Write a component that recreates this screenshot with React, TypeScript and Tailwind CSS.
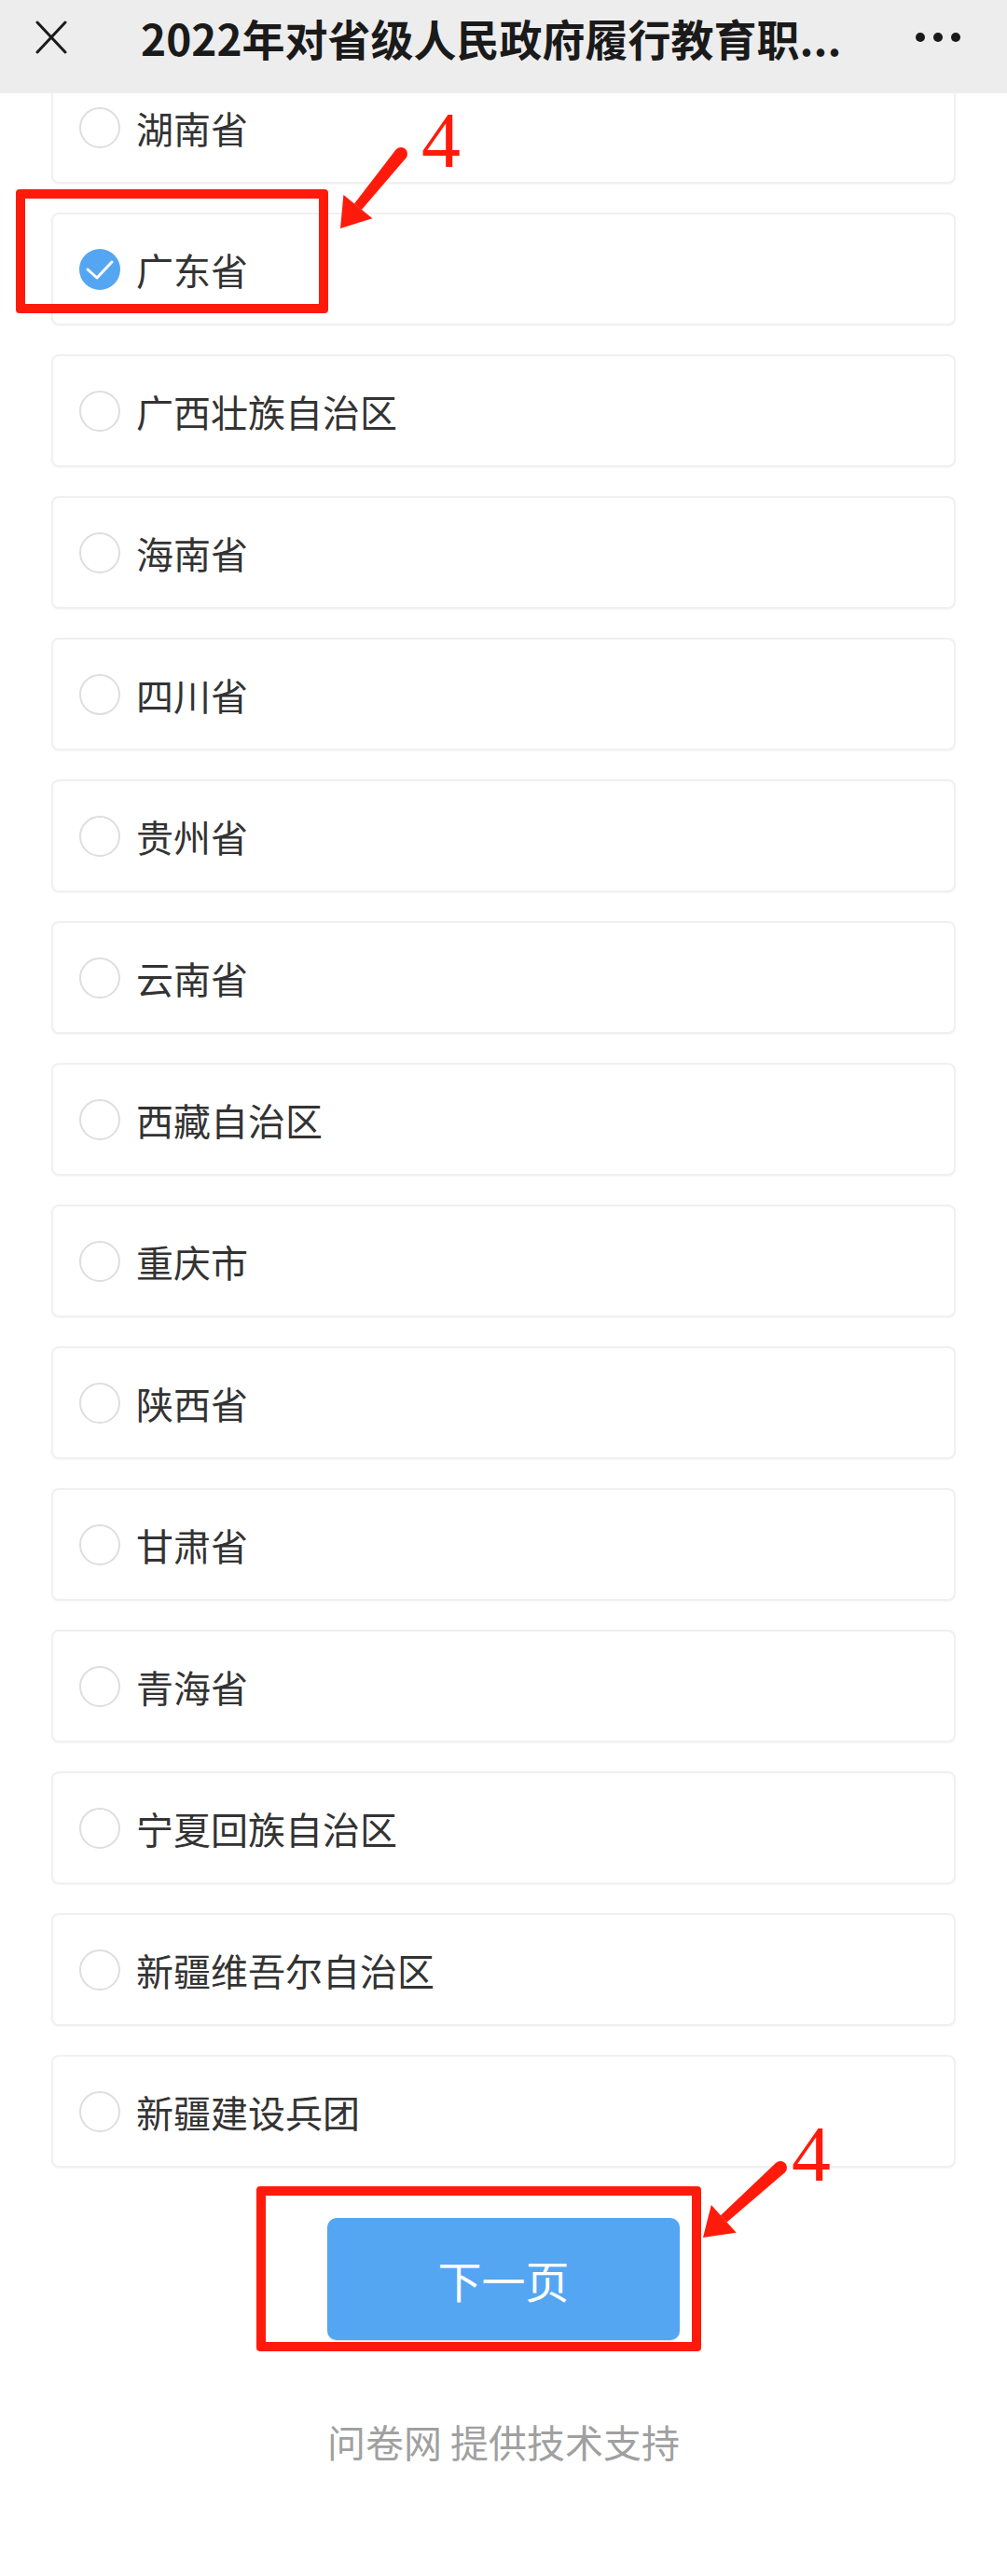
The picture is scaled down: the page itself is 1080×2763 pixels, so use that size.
import React from 'react';

const provinces = [
  '湖南省',
  '广东省',
  '广西壮族自治区',
  '海南省',
  '四川省',
  '贵州省',
  '云南省',
  '西藏自治区',
  '重庆市',
  '陕西省',
  '甘肃省',
  '青海省',
  '宁夏回族自治区',
  '新疆维吾尔自治区',
  '新疆建设兵团',
];

type Pt = [number, number];

// tapered arrow from tail to tip, as drawn in the annotation layer
const Arrow: React.FC<{ tail: Pt; tip: Pt }> = ({ tail, tip }) => {
  const dx = tip[0] - tail[0];
  const dy = tip[1] - tail[1];
  const len = Math.hypot(dx, dy);
  const ux = dx / len;
  const uy = dy / len;
  const nx = -uy;
  const ny = ux;
  const bx = tip[0] - ux * 30;
  const by = tip[1] - uy * 30;
  const p = (x: number, y: number) => `${x.toFixed(1)},${y.toFixed(1)}`;
  const shaft = [
    p(tail[0] + nx * 7, tail[1] + ny * 7),
    p(bx + nx * 5, by + ny * 5),
    p(bx - nx * 5, by - ny * 5),
    p(tail[0] - nx * 7, tail[1] - ny * 7),
  ].join(' ');
  const head = [p(bx + nx * 20, by + ny * 20), p(tip[0], tip[1]), p(bx - nx * 20, by - ny * 20)].join(' ');
  return (
    <svg className="absolute left-0 top-0 pointer-events-none" width={1080} height={2763} viewBox="0 0 1080 2763">
      <polygon points={shaft} fill="#ff1b0b" />
      <circle cx={tail[0]} cy={tail[1]} r={7} fill="#ff1b0b" />
      <polygon points={head} fill="#ff1b0b" />
    </svg>
  );
};

const Radio: React.FC<{ checked?: boolean }> = ({ checked }) =>
  checked ? (
    <svg width="44" height="44" viewBox="0 0 44 44" className="shrink-0">
      <circle cx="22" cy="22" r="22" fill="#55a6f2" />
      <polyline points="9,22 19,31 35,14" fill="none" stroke="#fff" strokeWidth="3" strokeLinecap="round" strokeLinejoin="round" />
    </svg>
  ) : (
    <div className="w-[44px] h-[44px] shrink-0 rounded-full border-2 border-[#dedede] bg-white" />
  );

export default function App() {
  return (
    <div className="relative w-[1080px] min-h-[2763px] bg-white overflow-hidden font-['Noto_Sans_CJK_SC','Noto_Sans',sans-serif]">
      {/* top bar */}
      <div className="relative z-10 h-[100px] bg-[#ededed]">
        <div className="h-[80px] flex items-center pl-[38px] pr-[50px]">
          <svg width="34" height="36" viewBox="0 0 34 36" className="shrink-0">
            <path d="M2 2 L32 34 M32 2 L2 34" stroke="#1a1a1a" strokeWidth="3" strokeLinecap="round" />
          </svg>
          <div className="ml-[79px] flex-1 whitespace-nowrap text-[46px] leading-none font-bold text-[#1a1a1a]">
            2022年对省级人民政府履行教育职...
          </div>
          <div className="flex items-center gap-[9px] shrink-0">
            <span className="w-[10px] h-[10px] rounded-full bg-[#1a1a1a]" />
            <span className="w-[10px] h-[10px] rounded-full bg-[#1a1a1a]" />
            <span className="w-[10px] h-[10px] rounded-full bg-[#1a1a1a]" />
          </div>
        </div>
      </div>

      {/* options */}
      <div className="-mt-[24px] px-[55px] flex flex-col gap-[31px]">
        {provinces.map((name) => (
          <div
            key={name}
            className="h-[121px] rounded-[8px] border-2 border-[#f0f0f0] bg-white flex items-center pl-[28px] shadow-[0_1px_2px_rgba(0,0,0,0.04)]"
          >
            <Radio checked={name === '广东省'} />
            <span className="ml-[17px] text-[40px] leading-none text-[#333333]">{name}</span>
          </div>
        ))}
      </div>

      {/* next page */}
      <div className="mt-[54px] flex justify-center">
        <div className="relative">
          <button className="w-[378px] h-[131px] rounded-[10px] bg-[#55a6f2] text-white text-[47px] leading-none shadow-[0_1px_2px_rgba(0,0,0,0.12)]">
            下一页
          </button>
          <div className="absolute -left-[76px] -top-[34px] w-[477px] h-[177px] border-[10px] border-[#ff1b0b] rounded-[4px]" />
        </div>
      </div>

      <div className="mt-[88px] text-center text-[41px] leading-none text-[#a0a0a0]">问卷网 提供技术支持</div>

      {/* annotations */}
      <div className="absolute left-[17px] top-[203px] w-[335px] h-[133px] border-[10px] border-[#ff1b0b] rounded-[4px]" />
      <Arrow tail={[430, 165]} tip={[365, 245]} />
      <Arrow tail={[837, 2325]} tip={[754, 2400]} />
      <div className="absolute left-[452px] top-[109px] text-[84px] leading-none text-[#ff1b0b] font-['Liberation_Serif',serif]">4</div>
      <div className="absolute left-[849px] top-[2269px] text-[84px] leading-none text-[#ff1b0b] font-['Liberation_Serif',serif]">4</div>
    </div>
  );
}
